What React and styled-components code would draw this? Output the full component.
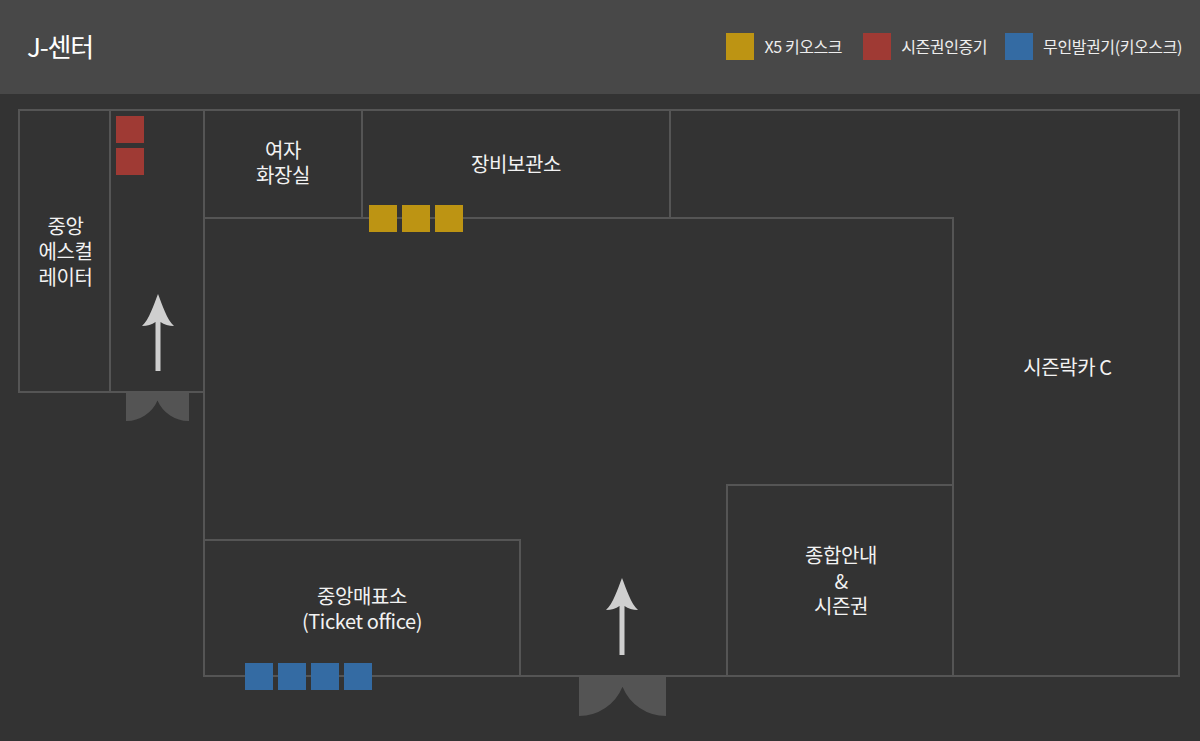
import React from "react";
import styled, { createGlobalStyle } from "styled-components";

const Global = createGlobalStyle`
  html, body { margin: 0; padding: 0; background: #333; overflow: hidden; }
  body { font-family: "Noto Sans CJK KR", "Noto Sans", sans-serif; color: #f2f2f2; }
`;
const Page = styled.div`
  width: 1200px;
  height: 741px;
  display: flex;
  flex-direction: column;
  background: #333;
`;
const Header = styled.header`
  height: 94px;
  flex: none;
  box-sizing: border-box;
  display: flex;
  align-items: center;
  justify-content: space-between;
  padding: 0 18px 2px 27px;
  background: #484848;
`;
const Title = styled.h1`
  margin: 0 0 2px;
  font-size: 26px;
  font-weight: 400;
  letter-spacing: -1.2px;
  color: #fff;
`;
const Legend = styled.ul`
  display: flex;
  gap: 18px;
  margin: 0;
  padding: 0;
  list-style: none;
`;
const LegendItem = styled.li`
  display: flex;
  align-items: center;
  gap: 10px;
  margin-right: ${(p) => p.$after || 0}px;
  font-size: 16px;
  letter-spacing: -0.4px;
  color: #eee;
`;
const Swatch = styled.span`
  width: 28px;
  height: 27px;
  background: ${(p) => p.$color};
`;
const Canvas = styled.main`
  position: relative;
  flex: 1;
`;
const Room = styled.div`
  position: absolute;
  box-sizing: border-box;
  left: ${(p) => p.$x}px;
  top: ${(p) => p.$y - 94}px;
  width: ${(p) => p.$w}px;
  height: ${(p) => p.$h}px;
  display: flex;
  flex-direction: column;
  align-items: center;
  justify-content: center;
  text-align: center;
  font-size: 20px;
  line-height: 25.5px;
  letter-spacing: -0.4px;
  color: #f2f2f2;
  border: 2px solid #555;
  border-left-width: ${(p) => (p.$noLeft ? 0 : 2)}px;
  border-right-width: ${(p) => (p.$noRight ? 0 : 2)}px;
  padding-bottom: ${(p) => p.$lift || 0}px;
  padding-left: ${(p) => p.$nudge || 0}px;
`;
const Line = styled.div`
  height: 25.5px;
  white-space: nowrap;
`;
const KioskGroup = styled.div`
  position: absolute;
  left: ${(p) => p.$x}px;
  top: ${(p) => p.$y - 94}px;
  display: flex;
  flex-direction: ${(p) => (p.$vertical ? "column" : "row")};
  gap: 5px;
`;
const Kiosk = styled.span`
  display: block;
  width: 28px;
  height: 27px;
  background: ${(p) => p.$color};
`;
const Marker = styled.svg`
  position: absolute;
  display: block;
  left: ${(p) => p.$x}px;
  top: ${(p) => p.$y - 94}px;
`;

const YELLOW = "#bd9413";
const RED = "#9f3a34";
const BLUE = "#346ba3";

const Kiosks = ({ x, y, n, color, vertical }) => (
  <KioskGroup $x={x} $y={y} $vertical={vertical}>
    {Array.from({ length: n }, (_, i) => <Kiosk key={i} $color={color} />)}
  </KioskGroup>
);
const Arrow = ({ x, y }) => (
  <Marker $x={x} $y={y} width="33" height="77" viewBox="0 0 33 77">
    <path d="M16 0 C20 10 25 26 32 32 Q24 32 18.5 28 V77 H13.5 V28 Q8 32 0 32 C7 26 12 10 16 0 Z" fill="#cfcfcf" />
  </Marker>
);
const Door = ({ x, y, half, h, peak, r }) => (
  <Marker $x={x} $y={y} width={half * 2} height={h} viewBox={`0 0 ${half * 2} ${h}`}>
    <path
      d={`M0 0 H${half * 2} V${h} A${r} ${r} 0 0 1 ${half} ${peak} A${r} ${r} 0 0 1 0 ${h} Z`}
      fill="#545454"
    />
  </Marker>
);

export default function App() {
  return (
    <Page>
      <Global />
      <Header>
        <Title>J-센터</Title>
        <Legend>
          <LegendItem $after={3}><Swatch $color={YELLOW} />X5 키오스크</LegendItem>
          <LegendItem><Swatch $color={RED} />시즌권인증기</LegendItem>
          <LegendItem><Swatch $color={BLUE} />무인발권기(키오스크)</LegendItem>
        </Legend>
      </Header>
      <Canvas>
        <Room $x={18} $y={109} $w={93} $h={284} $nudge={2}>
          <Line>중앙</Line><Line>에스컬</Line><Line>레이터</Line>
        </Room>
        <Room $x={109} $y={109} $w={96} $h={284} />
        <Room $x={203} $y={109} $w={160} $h={110} $lift={4}>
          <Line>여자</Line><Line>화장실</Line>
        </Room>
        <Room $x={361} $y={109} $w={310} $h={110}><Line>장비보관소</Line></Room>
        <Room $x={669} $y={109} $w={285} $h={110} $noRight />
        <Room $x={203} $y={217} $w={751} $h={460} />
        <Room $x={954} $y={109} $w={226} $h={568} $noLeft $lift={52} $nudge={3}>
          <Line>시즌락카 C</Line>
        </Room>
        <Room $x={203} $y={539} $w={318} $h={138}>
          <Line>중앙매표소</Line><Line>(Ticket office)</Line>
        </Room>
        <Room $x={726} $y={484} $w={228} $h={193} $nudge={2}>
          <Line>종합안내</Line><Line>&amp;</Line><Line>시즌권</Line>
        </Room>
        <Kiosks x={116} y={116} n={2} color={RED} vertical />
        <Kiosks x={369} y={205} n={3} color={YELLOW} />
        <Kiosks x={245} y={663} n={4} color={BLUE} />
        <Arrow x={141.5} y={294} />
        <Arrow x={605.5} y={578} />
        <Door x={126} y={393} half={31.5} h={28} peak={7.5} r={34} />
        <Door x={579} y={677} half={43.5} h={39} peak={9.7} r={47} />
      </Canvas>
    </Page>
  );
}
